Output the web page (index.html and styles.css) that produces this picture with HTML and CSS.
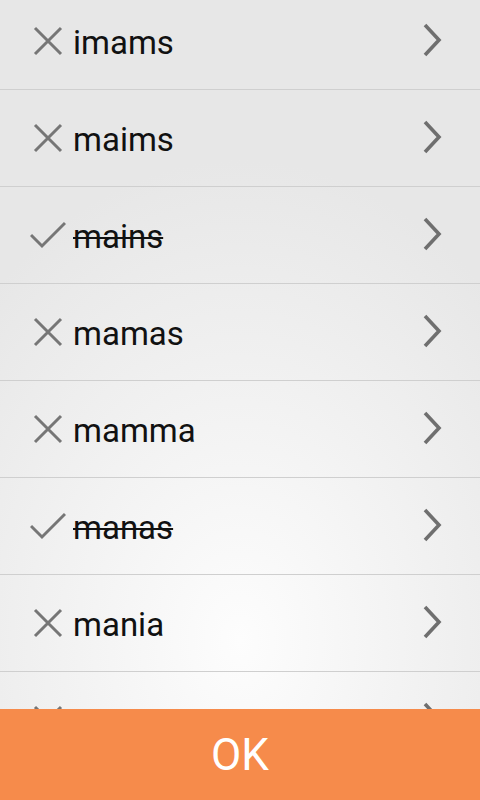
FILE: index.html
```html
<!DOCTYPE html>
<html>
<head>
<meta charset="utf-8">
<link rel="stylesheet" href="styles.css">
</head>
<body>
<div class="screen">
  <div class="list">
    <div class="rows">
      <div class="row"><svg class="mark" viewBox="0 0 36 36"><path d="M5 5L31 31M31 5L5 31"/></svg><span class="word">imams</span><svg class="chev" viewBox="0 0 20 36"><path d="M3 3L17 18L3 33"/></svg></div>
      <div class="row"><svg class="mark" viewBox="0 0 36 36"><path d="M5 5L31 31M31 5L5 31"/></svg><span class="word">maims</span><svg class="chev" viewBox="0 0 20 36"><path d="M3 3L17 18L3 33"/></svg></div>
      <div class="row"><svg class="mark" viewBox="0 0 36 36"><path d="M1 18L12 29L35 6"/></svg><span class="word done">mains</span><svg class="chev" viewBox="0 0 20 36"><path d="M3 3L17 18L3 33"/></svg></div>
      <div class="row"><svg class="mark" viewBox="0 0 36 36"><path d="M5 5L31 31M31 5L5 31"/></svg><span class="word">mamas</span><svg class="chev" viewBox="0 0 20 36"><path d="M3 3L17 18L3 33"/></svg></div>
      <div class="row"><svg class="mark" viewBox="0 0 36 36"><path d="M5 5L31 31M31 5L5 31"/></svg><span class="word">mamma</span><svg class="chev" viewBox="0 0 20 36"><path d="M3 3L17 18L3 33"/></svg></div>
      <div class="row"><svg class="mark" viewBox="0 0 36 36"><path d="M1 18L12 29L35 6"/></svg><span class="word done">manas</span><svg class="chev" viewBox="0 0 20 36"><path d="M3 3L17 18L3 33"/></svg></div>
      <div class="row"><svg class="mark" viewBox="0 0 36 36"><path d="M5 5L31 31M31 5L5 31"/></svg><span class="word">mania</span><svg class="chev" viewBox="0 0 20 36"><path d="M3 3L17 18L3 33"/></svg></div>
      <div class="row"><svg class="mark" viewBox="0 0 36 36"><path d="M5 5L31 31M31 5L5 31"/></svg><span class="word"></span><svg class="chev" viewBox="0 0 20 36"><path d="M3 3L17 18L3 33"/></svg></div>
    </div>
  </div>
  <div class="ok">OK</div>
</div>
</body>
</html>
```

FILE: styles.css
```css
html, body {
  margin: 0;
  padding: 0;
}
body {
  font-family: Roboto, "Noto Sans", sans-serif;
}
.screen {
  width: 480px;
  height: 800px;
  display: flex;
  flex-direction: column;
  overflow: hidden;
  background: radial-gradient(ellipse 75% 60% at 50% 80%, #fdfdfd 0%, #f3f3f3 45%, #e7e7e7 100%);
  background-color: #e7e7e7;
}
.list {
  flex: 1;
  overflow: hidden;
}
.rows {
  margin-top: -7px;
  display: flex;
  flex-direction: column;
}
.row {
  height: 96px;
  border-bottom: 1px solid #cfcfcf;
  display: flex;
  align-items: center;
  padding-left: 30px;
  padding-right: 38px;
}
.mark {
  width: 36px;
  height: 36px;
  flex: none;
  fill: none;
  stroke: #767676;
  stroke-width: 3;
}
.word {
  flex: 1;
  margin-left: 7px;
  font-size: 33px;
  color: #111;
  line-height: normal;
  margin-top: 2px;
}
.word.done {
  text-decoration: line-through;
  text-decoration-thickness: 2px;
}
.chev {
  width: 20px;
  height: 36px;
  flex: none;
  fill: none;
  stroke: #6f6f6f;
  stroke-width: 3.6;
  margin-top: -2px;
}
.ok {
  height: 91px;
  flex: none;
  background: #f68b4b;
  color: #fff;
  font-size: 44px;
  display: flex;
  align-items: center;
  justify-content: center;
}
```
